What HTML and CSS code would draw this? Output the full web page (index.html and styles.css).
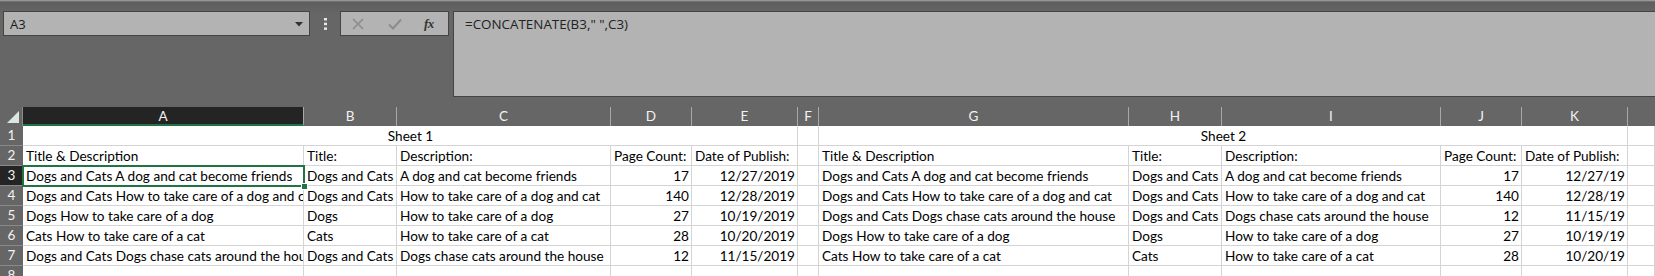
FILE: index.html
```html
<!DOCTYPE html>
<html>
<head>
<meta charset="utf-8">
<link rel="stylesheet" href="styles.css">
</head>
<body>
<div class="app">
  <div class="topline"></div>
  <div class="toolbar">
    <div class="namebox">
      <span class="name">A3</span>
      <svg class="arrow" width="8" height="5" viewBox="0 0 8 5"><path d="M0 0H8L4 4.5Z" fill="#333"/></svg>
    </div>
    <div class="dots">
      <svg width="3" height="12" viewBox="0 0 3 12"><rect x="0" y="0" width="3" height="2.5" fill="#e6e6e6"/><rect x="0" y="4.7" width="3" height="2.5" fill="#e6e6e6"/><rect x="0" y="9.4" width="3" height="2.5" fill="#e6e6e6"/></svg>
    </div>
    <div class="fxbtns">
      <svg class="ic" width="12" height="12" viewBox="0 0 12 12"><path d="M1 1L11 11M11 1L1 11" stroke="#8c8c8c" stroke-width="1.6"/></svg>
      <svg class="ic" width="14" height="12" viewBox="0 0 14 12"><path d="M1 6.5L5 10.5L13 1.5" stroke="#8c8c8c" stroke-width="2" fill="none"/></svg>
      <span class="fx">fx</span>
    </div>
    <div class="formula">=CONCATENATE(B3," ",C3)</div>
  </div>

  <div class="sheet">
    <div class="corner"><span class="tri"></span></div>
    <div class="ch sel">A</div><div class="ch">B</div><div class="ch">C</div><div class="ch">D</div><div class="ch">E</div><div class="ch">F</div><div class="ch">G</div><div class="ch">H</div><div class="ch">I</div><div class="ch">J</div><div class="ch">K</div><div class="ch last"></div>

    <div class="rh">1</div>
    <div class="c merge center">Sheet 1</div><div class="c"></div><div class="c merge center">Sheet 2</div><div class="c"></div>

    <div class="rh">2</div>
    <div class="c">Title &amp; Description</div><div class="c">Title:</div><div class="c">Description:</div><div class="c">Page Count:</div><div class="c">Date of Publish:</div><div class="c"></div>
    <div class="c">Title &amp; Description</div><div class="c">Title:</div><div class="c">Description:</div><div class="c">Page Count:</div><div class="c">Date of Publish:</div><div class="c"></div>

    <div class="rh rsel">3</div>
    <div class="c">Dogs and Cats A dog and cat become friends</div><div class="c">Dogs and Cats</div><div class="c">A dog and cat become friends</div><div class="c r">17</div><div class="c r">12/27/2019</div><div class="c"></div>
    <div class="c">Dogs and Cats A dog and cat become friends</div><div class="c">Dogs and Cats</div><div class="c">A dog and cat become friends</div><div class="c r">17</div><div class="c r">12/27/19</div><div class="c"></div>

    <div class="rh">4</div>
    <div class="c">Dogs and Cats How to take care of a dog and cat</div><div class="c">Dogs and Cats</div><div class="c">How to take care of a dog and cat</div><div class="c r">140</div><div class="c r">12/28/2019</div><div class="c"></div>
    <div class="c">Dogs and Cats How to take care of a dog and cat</div><div class="c">Dogs and Cats</div><div class="c">How to take care of a dog and cat</div><div class="c r">140</div><div class="c r">12/28/19</div><div class="c"></div>

    <div class="rh">5</div>
    <div class="c">Dogs How to take care of a dog</div><div class="c">Dogs</div><div class="c">How to take care of a dog</div><div class="c r">27</div><div class="c r">10/19/2019</div><div class="c"></div>
    <div class="c">Dogs and Cats Dogs chase cats around the house</div><div class="c">Dogs and Cats</div><div class="c">Dogs chase cats around the house</div><div class="c r">12</div><div class="c r">11/15/19</div><div class="c"></div>

    <div class="rh">6</div>
    <div class="c">Cats How to take care of a cat</div><div class="c">Cats</div><div class="c">How to take care of a cat</div><div class="c r">28</div><div class="c r">10/20/2019</div><div class="c"></div>
    <div class="c">Dogs How to take care of a dog</div><div class="c">Dogs</div><div class="c">How to take care of a dog</div><div class="c r">27</div><div class="c r">10/19/19</div><div class="c"></div>

    <div class="rh">7</div>
    <div class="c">Dogs and Cats Dogs chase cats around the house</div><div class="c">Dogs and Cats</div><div class="c">Dogs chase cats around the house</div><div class="c r">12</div><div class="c r">11/15/2019</div><div class="c"></div>
    <div class="c">Cats How to take care of a cat</div><div class="c">Cats</div><div class="c">How to take care of a cat</div><div class="c r">28</div><div class="c r">10/20/19</div><div class="c"></div>

    <div class="rh">8</div>
    <div class="c"></div><div class="c"></div><div class="c"></div><div class="c"></div><div class="c"></div><div class="c"></div>
    <div class="c"></div><div class="c"></div><div class="c"></div><div class="c"></div><div class="c"></div><div class="c"></div>

    <div class="selection"><span class="handle"></span></div>
  </div>
</div>
</body>
</html>
```

FILE: styles.css
```css
html, body {
  margin: 0;
  padding: 0;
  background: #666666;
  overflow: hidden;
}
.app {
  width: 1655px;
  height: 276px;
  overflow: hidden;
  background: #666666;
}
.topline {
  height: 2px;
  background: linear-gradient(#a9a9a9, #5f5f5f);
}
.toolbar {
  display: flex;
  align-items: flex-start;
  padding: 9px 0 0 3px;
  height: 96px;
  box-sizing: border-box;
  background: linear-gradient(#5e5e5e, #666666 12px);
}
.namebox {
  box-sizing: border-box;
  width: 307px;
  height: 25px;
  background: #b3b3b3;
  border: 1px solid #444444;
  display: flex;
  align-items: center;
  justify-content: space-between;
  padding: 0 6px 0 6px;
  font-family: "Open Sans", "Noto Sans", sans-serif;
  font-size: 13px;
  color: #1a1a1a;
}
.namebox .arrow { margin-top: 1px; }
.dots {
  width: 30px;
  height: 25px;
  display: flex;
  align-items: center;
  justify-content: center;
}
.fxbtns {
  box-sizing: border-box;
  width: 109px;
  height: 25px;
  background: #b3b3b3;
  border: 1px solid #444444;
  display: flex;
  align-items: center;
  padding-left: 11px;
}
.fxbtns .ic:nth-child(1) { margin-right: 24px; }
.fxbtns .ic:nth-child(2) { margin-right: 22px; }
.fx {
  font-family: "Liberation Serif", serif;
  font-style: italic;
  font-weight: bold;
  font-size: 13px;
  color: #333333;
  letter-spacing: -0.5px;
}
.formula {
  box-sizing: border-box;
  margin-left: 4px;
  flex: 1;
  height: 86px;
  background: #b3b3b3;
  border: 1px solid #444444;
  border-right: none;
  padding: 3px 0 0 11px;
  font-family: "Open Sans", "Noto Sans", sans-serif;
  font-size: 13.4px;
  color: #222222;
}
.sheet {
  position: relative;
  margin-top: 9px;
  display: grid;
  grid-template-columns: 23px 281px 93px 214px 81px 106px 21px 310px 93px 219px 81px 106px 27px;
  grid-template-rows: 19px repeat(8, 20px);
  font-family: "Lato", "Liberation Sans", sans-serif;
  font-size: 13.6px;
  color: #000000;
}
.corner {
  background: #666666;
  border-right: 1px solid #8a8a8a;
  box-sizing: border-box;
  position: relative;
}
.tri {
  position: absolute;
  right: 3px;
  bottom: 3px;
  width: 0;
  height: 0;
  border-left: 12px solid transparent;
  border-bottom: 12px solid #dce6de;
}
.ch {
  box-sizing: border-box;
  background: #666666;
  border-right: 1px solid #a8a8a8;
  color: #f2f2f2;
  text-align: center;
  line-height: 19px;
  font-size: 13.5px;
}
.ch.sel {
  background: #242424;
  border-bottom: 2px solid #217346;
  line-height: 18px;
}
.ch.last { border-right: none; }
.rh {
  box-sizing: border-box;
  background: #666666;
  border-bottom: 1px solid #8a8a8a;
  color: #f2f2f2;
  text-align: center;
  line-height: 19px;
  font-size: 13.5px;
}
.rh.rsel { background: #242424; }
.c {
  box-sizing: border-box;
  background: #ffffff;
  border-right: 1px solid #d4d4d4;
  border-bottom: 1px solid #d4d4d4;
  padding: 0 2px 0 3px;
  white-space: nowrap;
  overflow: hidden;
  line-height: 20px;
}
.c.merge { grid-column: span 5; }
.c.center { text-align: center; }
.c.r { text-align: right; }
.selection {
  position: absolute;
  left: 22px;
  top: 58px;
  width: 283px;
  height: 22px;
  box-sizing: border-box;
  border: 2px solid #217346;
  pointer-events: none;
}
.handle {
  position: absolute;
  right: -5px;
  bottom: -5px;
  width: 5px;
  height: 5px;
  background: #217346;
  border: 1px solid #ffffff;
}
```
